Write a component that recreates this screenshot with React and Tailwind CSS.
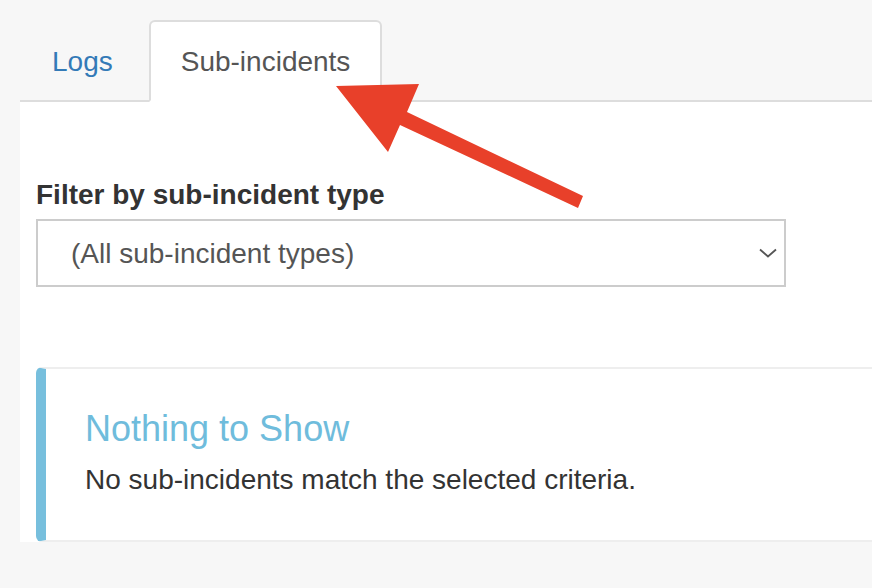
export default function App() {
  return (
    <div className="relative h-[588px] w-[872px] overflow-hidden bg-[#f7f7f7] font-['Liberation_Sans',Arial,sans-serif]">
      <div className="pt-[20px] pl-[20px]">
        <ul className="flex border-b-2 border-[#ddd]">
          <li className="mr-[4px] -mb-[2px]">
            <a className="block rounded-t-[6px] border-2 border-transparent px-[30px] pt-[20px] pb-[18px] text-[28px] leading-[40px] text-[#337ab7]">
              Logs
            </a>
          </li>
          <li className="-mb-[2px]">
            <a className="block rounded-t-[6px] border-2 border-[#ddd] border-b-transparent bg-white px-[30px] pt-[20px] pb-[18px] text-[28px] leading-[40px] text-[#555]">
              Sub-incidents
            </a>
          </li>
        </ul>
        <div className="bg-white pl-[16px] pt-[73px]">
          <div className="text-[28px] font-bold leading-[40px] text-[#333]">
            Filter by sub-incident type
          </div>
          <div className="mt-[4px] flex h-[68px] w-[750px] items-center justify-between border-2 border-[#ccc] bg-white pl-[33px] pr-[7px] pt-[2px] text-[28px] leading-[40px] text-[#555]">
            <span>(All sub-incident types)</span>
            <svg width="18" height="10" viewBox="0 0 18 10" fill="none" className="-mt-[2px]">
              <path d="M1 1.5 L9 8.5 L17 1.5" stroke="#555" strokeWidth="1.8" />
            </svg>
          </div>
          <div className="-mr-[20px] mt-[80px] rounded-[6px] border-2 border-l-[10px] border-[#eee] border-l-[#77bfdd] pb-[40px] pl-[39px] pt-[40px]">
            <div className="mb-[11px] text-[36px] leading-[39.6px] text-[#6fbcdc]">
              Nothing to Show
            </div>
            <div className="text-[28px] leading-[40px] text-[#333]">
              No sub-incidents match the selected criteria.
            </div>
          </div>
        </div>
      </div>
      <svg
        className="pointer-events-none absolute left-0 top-0"
        width="872"
        height="588"
        viewBox="0 0 872 588"
      >
        <polygon
          points="336,86 419,84 407,112 583,196 578,208 400,125 388,152"
          fill="#e8402a"
        />
      </svg>
    </div>
  );
}
